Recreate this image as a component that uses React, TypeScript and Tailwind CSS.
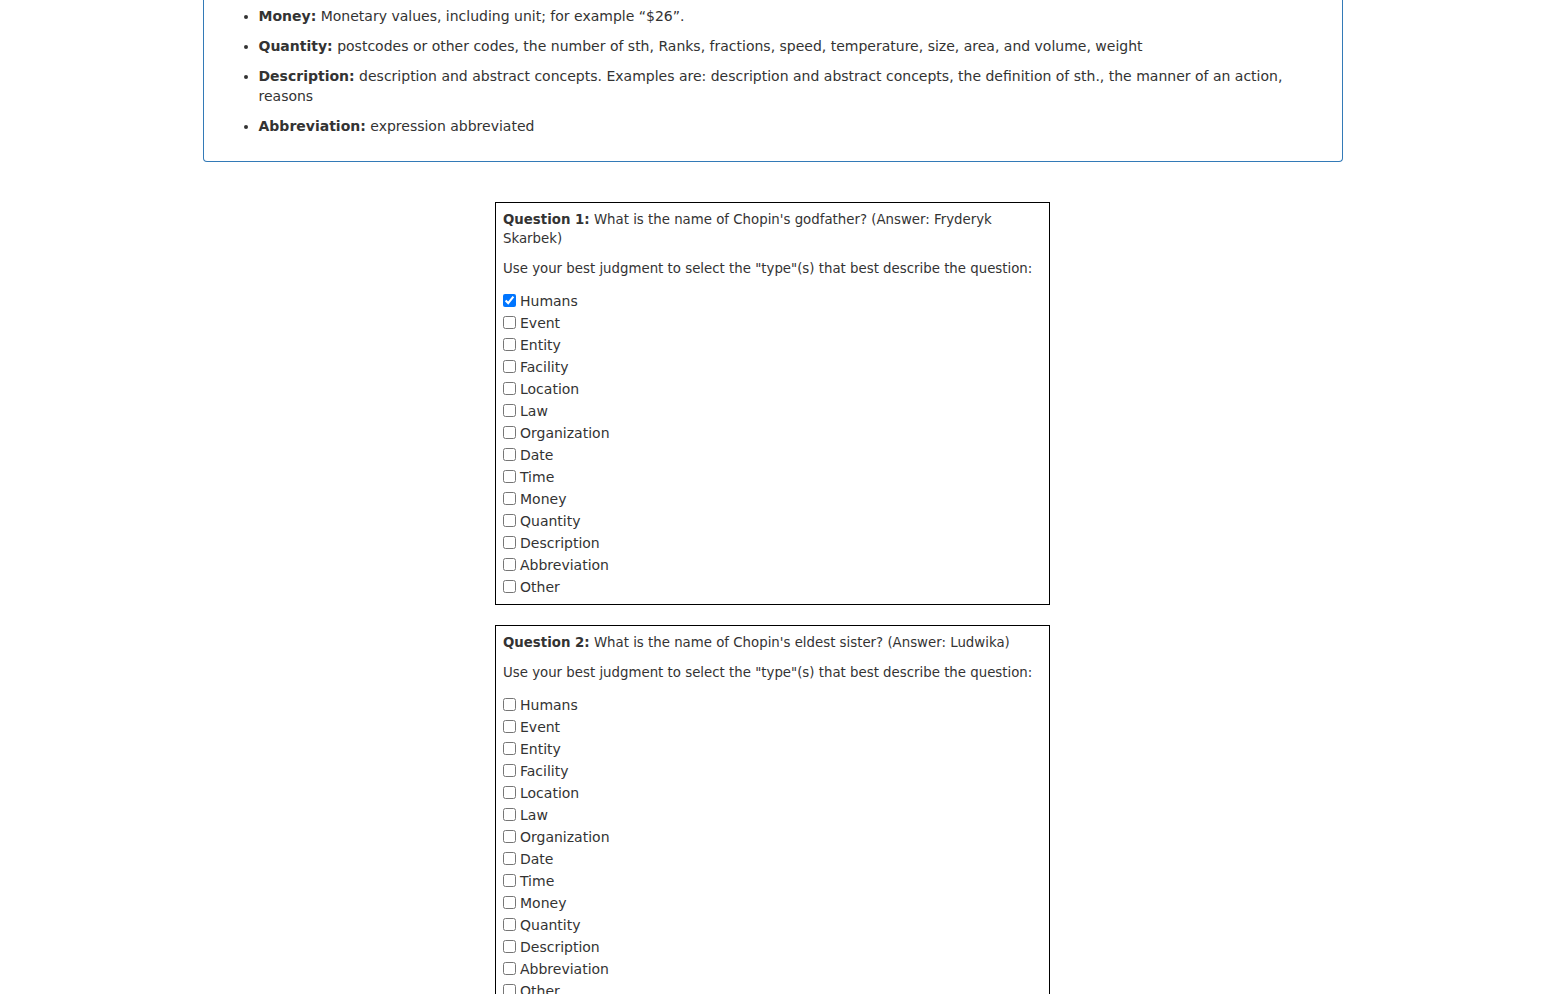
import React from "react";

type Definition = {
  label: string;
  text: string;
};

const DEFINITIONS: Definition[] = [
  { label: "Money:", text: "Monetary values, including unit; for example \u201c$26\u201d." },
  {
    label: "Quantity:",
    text: "postcodes or other codes, the number of sth, Ranks, fractions, speed, temperature, size, area, and volume, weight",
  },
  {
    label: "Description:",
    text: "description and abstract concepts. Examples are: description and abstract concepts, the definition of sth., the manner of an action, reasons",
  },
  { label: "Abbreviation:", text: "expression abbreviated" },
];

const TYPES = [
  "Humans",
  "Event",
  "Entity",
  "Facility",
  "Location",
  "Law",
  "Organization",
  "Date",
  "Time",
  "Money",
  "Quantity",
  "Description",
  "Abbreviation",
  "Other",
];

type Question = {
  id: number;
  text: string;
  checked: string[];
};

const QUESTIONS: Question[] = [
  {
    id: 1,
    text: "What is the name of Chopin's godfather? (Answer: Fryderyk Skarbek)",
    checked: ["Humans"],
  },
  {
    id: 2,
    text: "What is the name of Chopin's eldest sister? (Answer: Ludwika)",
    checked: [],
  },
];

function QuestionBox({ question }: { question: Question }) {
  return (
    <div className="w-[555px] border border-black px-[7px] pb-[6px] pt-[7px]">
      <div className="text-[13.33px] leading-[19px]">
        <p className="mb-[11px]">
          <b>Question {question.id}:</b> {question.text}
        </p>
        <p className="mb-[10px]">
          Use your best judgment to select the "type"(s) that best describe the question:
        </p>
      </div>
      <div className="pt-[2px]">
        {TYPES.map((type) => (
          <label key={type} className="flex h-[22px] items-center">
            <input
              type="checkbox"
              name={`q${question.id}`}
              defaultChecked={question.checked.includes(type)}
              className="m-0 mr-[4px] h-[13px] w-[13px] -translate-y-[1px]"
            />
            <span>{type}</span>
          </label>
        ))}
      </div>
    </div>
  );
}

export default function App() {
  return (
    <div className="min-h-screen bg-white pb-[40px] font-['DejaVu_Sans','Liberation_Sans',sans-serif] text-[14px] leading-[20px] text-[#333]">
      <div className="w-[1545px]">
        <div className="mx-auto w-[1140px]">
          <div className="rounded-b-[4px] border border-t-0 border-[#337ab7] pb-[15px] pl-[15px] pr-[15px] pt-[6px]">
            <ul className="list-disc pl-[40px]">
              {DEFINITIONS.map((item) => (
                <li key={item.label} className="mb-[10px]">
                  <b>{item.label}</b> {item.text}
                </li>
              ))}
            </ul>
          </div>
        </div>

        <div className="mt-[40px] flex flex-col items-center gap-[20px]">
          {QUESTIONS.map((question) => (
            <QuestionBox key={question.id} question={question} />
          ))}
        </div>
      </div>
    </div>
  );
}
